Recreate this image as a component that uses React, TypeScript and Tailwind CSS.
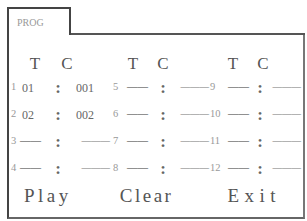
const cols =
  "grid grid-cols-[11px_30px_16px_44px_14px_31px_16px_38px_13px_30px_16px_33px] items-center h-[27px]";

type Row = { idx: [string, string, string]; t?: string; c?: string };

const rows: Row[] = [
  { idx: ["1", "5", "9"], t: "01", c: "001" },
  { idx: ["2", "6", "10"], t: "02", c: "002" },
  { idx: ["3", "7", "11"] },
  { idx: ["4", "8", "12"] },
];

const Idx = ({ n, pad }: { n: string; pad: string }) => (
  <span className={`${pad} text-[10.5px] text-[#999] leading-none`}>{n}</span>
);

const Colon = () => (
  <span className="text-center text-[17px] font-bold text-[#666] leading-none">:</span>
);

const TDash = ({ pad }: { pad: string }) => (
  <span className={`${pad} text-[10.5px] font-bold text-[#777] leading-none`}>——</span>
);

const CDash = () => (
  <span className="text-right text-[9.5px] font-bold text-[#777] leading-none">———</span>
);

export default function App() {
  return (
    <div className="w-[307px] h-[221px] bg-white pt-[7px] pl-[7px] pr-[2px] pb-[2px] flex flex-col font-['Liberation_Serif',serif]">
      <div className="flex h-[28px] shrink-0">
        <div className="w-[64px] border-t-2 border-l-2 border-r-2 border-[#444] pl-[8px] pt-[9px] text-[10px] text-[#999] leading-none">
          PROG
        </div>
        <div className="flex-1 border-b-2 border-[#555]" />
      </div>

      <div className="flex-1 border-l-2 border-r-2 border-b-2 border-l-[#444] border-r-[#777] border-b-[#666] pt-[17px] flex flex-col">
        {/* column heads */}
        <div className="flex items-center h-[22px] text-[17px] text-[#555] leading-none">
          <span className="w-[20px] text-center ml-[16px]">T</span>
          <span className="w-[20px] text-center ml-[12px]">C</span>
          <span className="w-[20px] text-center ml-[46px]">T</span>
          <span className="w-[20px] text-center ml-[10px]">C</span>
          <span className="w-[20px] text-center ml-[50px]">T</span>
          <span className="w-[20px] text-center ml-[10px]">C</span>
        </div>

        {rows.map((r) => (
          <div key={r.idx[0]} className={cols}>
            <Idx n={r.idx[0]} pad="pl-[2px]" />
            {r.t ? (
              <span className="pl-[2px] text-[12px] text-[#666] leading-none">{r.t}</span>
            ) : (
              <TDash pad="pl-[0px]" />
            )}
            <Colon />
            {r.c ? (
              <span className="pl-[10px] text-[12px] text-[#666] leading-none">{r.c}</span>
            ) : (
              <CDash />
            )}
            <Idx n={r.idx[1]} pad="pl-[3px]" />
            <TDash pad="pl-[3px]" />
            <Colon />
            <CDash />
            <Idx n={r.idx[2]} pad="pl-[1px]" />
            <TDash pad="pl-[6px]" />
            <Colon />
            <CDash />
          </div>
        ))}

        <div className="flex items-center h-[26px] text-[19px] text-[#555] leading-none">
          <span className="ml-[15px] tracking-[3.5px]">Play</span>
          <span className="ml-[48px] tracking-[2.5px]">Clear</span>
          <span className="ml-[54px] tracking-[5.5px]">Exit</span>
        </div>
      </div>
    </div>
  );
}
